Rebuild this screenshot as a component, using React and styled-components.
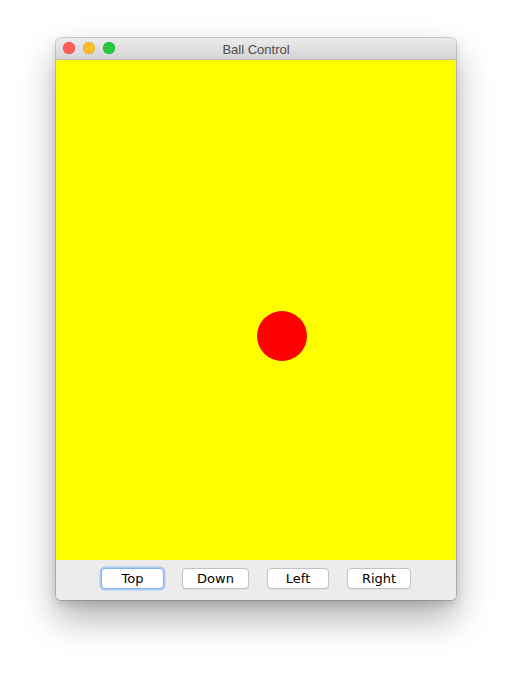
import React, { useState } from 'react';
import styled, { createGlobalStyle } from 'styled-components';

const GlobalStyle = createGlobalStyle`
  html, body {
    margin: 0;
    padding: 0;
    background: #ffffff;
  }
  body {
    font-family: "DejaVu Sans", "Liberation Sans", sans-serif;
  }
`;

const Page = styled.div`
  width: 512px;
  height: 673px;
  padding: 38px 0 0 56px;
  box-sizing: border-box;
  background: #ffffff;
`;

const Window = styled.div`
  width: 400px;
  display: flex;
  flex-direction: column;
  border-radius: 5px;
  overflow: hidden;
  background: #ececec;
  box-shadow: 0 0 0 1px rgba(0, 0, 0, 0.16), 0 18px 36px rgba(0, 0, 0, 0.32),
    0 4px 10px rgba(0, 0, 0, 0.12);
`;

const TitleBar = styled.div`
  position: relative;
  height: 21px;
  display: flex;
  align-items: center;
  justify-content: center;
  background: linear-gradient(#ebebeb, #d5d5d5);
  border-bottom: 1px solid #b9b9b9;
`;

const Lights = styled.div`
  position: absolute;
  left: 7px;
  top: 4px;
  display: flex;
  gap: 8px;
`;

const Light = styled.span`
  width: 12px;
  height: 12px;
  border-radius: 50%;
  background: ${(p) => p.$color};
  box-shadow: inset 0 0 0 0.5px ${(p) => p.$edge};
`;

const Title = styled.div`
  font-family: "Liberation Sans", "DejaVu Sans", sans-serif;
  font-size: 13px;
  color: #4d4d4d;
  padding-top: 1px;
`;

const Canvas = styled.div`
  position: relative;
  height: 500px;
  background: #ffff00;
  overflow: hidden;
`;

const Ball = styled.div`
  position: absolute;
  width: 50px;
  height: 50px;
  border-radius: 50%;
  background: #ff0000;
`;

const ButtonBar = styled.div`
  height: 40px;
  display: flex;
  align-items: flex-start;
  justify-content: center;
  gap: 18px;
  padding-top: 8px;
  box-sizing: border-box;
  background: #ececec;
`;

const Button = styled.button`
  height: 21px;
  width: ${(p) => p.$w}px;
  padding: 0;
  font-family: "DejaVu Sans", "Liberation Sans", sans-serif;
  font-size: 13px;
  color: #000;
  background: #ffffff;
  border: 1px solid ${(p) => (p.$focus ? '#86b3ec' : '#c2c2c2')};
  border-radius: 4px;
  box-shadow: ${(p) =>
    p.$focus ? '0 0 0 1.5px #a9cbf5' : '0 0.5px 0 rgba(0,0,0,0.08)'};
  cursor: pointer;
  line-height: 19px;
`;

const STEP = 10;

export default function App() {
  const [pos, setPos] = useState({ x: 201, y: 251 });
  const [focus, setFocus] = useState('Top');

  const move = (name, dx, dy) => {
    setFocus(name);
    setPos((p) => ({ x: p.x + dx, y: p.y + dy }));
  };

  const buttons = [
    { name: 'Top', w: 63, dx: 0, dy: -STEP },
    { name: 'Down', w: 67, dx: 0, dy: STEP },
    { name: 'Left', w: 62, dx: -STEP, dy: 0 },
    { name: 'Right', w: 64, dx: STEP, dy: 0 },
  ];

  return (
    <Page>
      <GlobalStyle />
      <Window>
        <TitleBar>
          <Lights>
            <Light $color="#fc5f57" $edge="#e0443e" />
            <Light $color="#fdbc2e" $edge="#dea123" />
            <Light $color="#28c840" $edge="#1aab29" />
          </Lights>
          <Title>Ball Control</Title>
        </TitleBar>
        <Canvas>
          <Ball style={{ left: pos.x, top: pos.y }} />
        </Canvas>
        <ButtonBar>
          {buttons.map((b) => (
            <Button
              key={b.name}
              $w={b.w}
              $focus={focus === b.name}
              onClick={() => move(b.name, b.dx, b.dy)}
            >
              {b.name}
            </Button>
          ))}
        </ButtonBar>
      </Window>
    </Page>
  );
}
